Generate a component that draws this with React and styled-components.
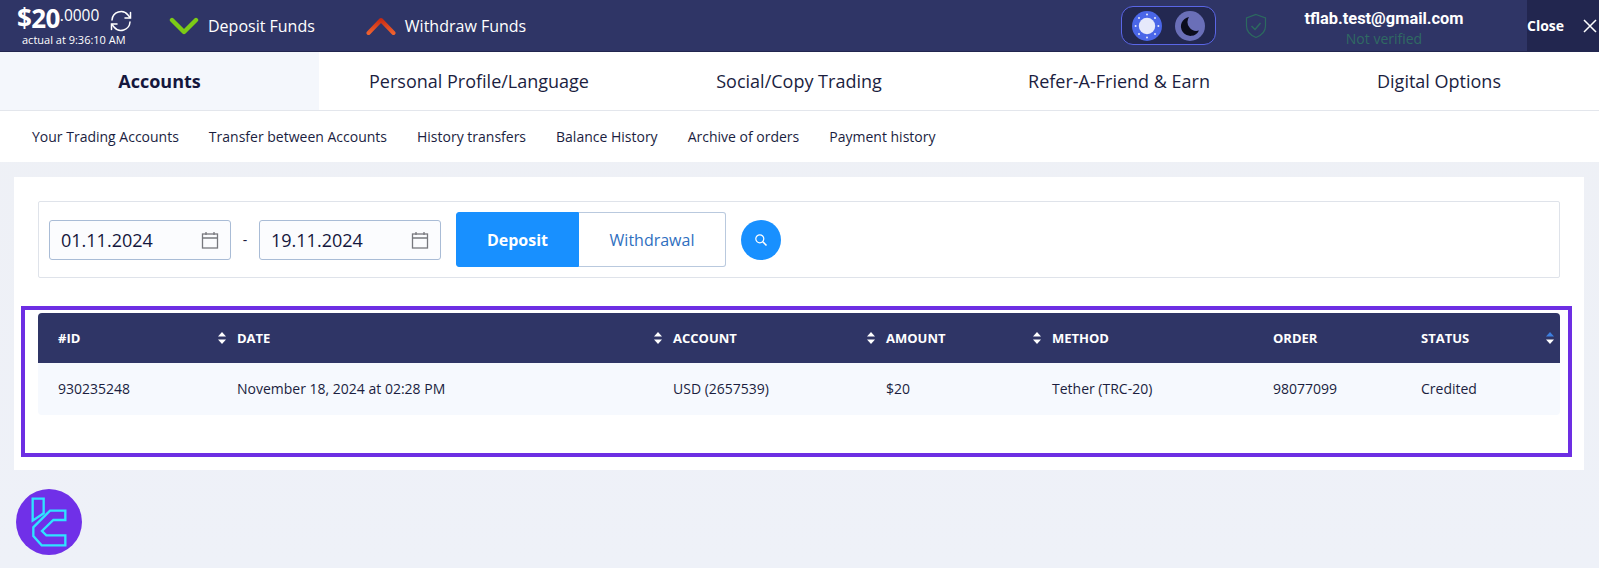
import React from "react";
import styled, { createGlobalStyle } from "styled-components";

const GlobalStyle = createGlobalStyle`
  html, body {
    margin: 0;
    padding: 0;
    height: 100%;
    overflow: hidden;
    font-family: "Open Sans", "Liberation Sans", sans-serif;
    color: #1b1e3f;
  }
  * { box-sizing: border-box; }
`;

const Page = styled.div`
  position: relative;
  width: 1599px;
  height: 568px;
  background: linear-gradient(180deg, #eef0f5 0%, #eef1f8 100%);
`;

const TopBar = styled.header`
  height: 52px;
  display: flex;
  align-items: center;
  background: #2f3566;
  color: #fff;
  border-bottom: 1px solid #22264f;
`;

const Balance = styled.div`
  width: 92px;
  margin: 0 0 2px 17px;
  display: flex;
  flex-direction: column;
  flex-shrink: 0;
`;

const Amount = styled.div`
  display: flex;
  align-items: flex-start;
  height: 30px;
  font-size: 26px;
  line-height: 30px;
  font-weight: 700;
  letter-spacing: -0.6px;

  span {
    font-size: 15.5px;
    line-height: 24px;
    font-weight: 400;
    letter-spacing: 0;
  }
`;

const Actual = styled.div`
  font-size: 11px;
  line-height: 13px;
  margin-left: 5px;
  white-space: nowrap;
`;

const Refresh = styled.svg`
  width: 24px;
  height: 24px;
  margin: -9px 0 0 0;
  flex-shrink: 0;
`;

const FundLink = styled.div`
  display: flex;
  align-items: center;
  gap: 9px;
  margin-left: ${(p) => p.$offset}px;
  font-size: 16px;
  white-space: nowrap;
`;

const Chevron = styled.svg`
  width: 30px;
  height: 20px;
`;

const RightGroup = styled.div`
  margin-left: auto;
  display: flex;
  align-items: center;
  height: 100%;
`;

const ThemeSwitch = styled.div`
  width: 95px;
  height: 39px;
  display: flex;
  align-items: center;
  justify-content: space-between;
  padding: 0 10px;
  border: 1px solid #5a66e6;
  border-radius: 12px;
  background: #232851;
`;

const ThemeIcon = styled.svg`
  width: 30px;
  height: 30px;
`;

const Shield = styled.svg`
  width: 22px;
  height: 26px;
  margin-left: 29px;
`;

const UserBlock = styled.div`
  width: 160px;
  margin-left: 37px;
  text-align: center;
  white-space: nowrap;
`;

const Email = styled.div`
  font-family: Roboto, "Liberation Sans", sans-serif;
  font-weight: 700;
  font-size: 16.4px;
  line-height: 18px;
  margin-top: 6px;
`;

const Verified = styled.div`
  font-size: 14px;
  line-height: 18px;
  margin-top: 2px;
  color: #2f6a63;
`;

const CloseBox = styled.div`
  width: 72px;
  height: 100%;
  margin-left: 63px;
  display: flex;
  align-items: center;
  justify-content: space-between;
  padding-right: 2px;
  background: #22264f;
  font-size: 14px;
  font-weight: 700;
`;

const CloseIcon = styled.svg`
  width: 14px;
  height: 14px;
`;

const Tabs = styled.nav`
  display: grid;
  grid-template-columns: 319px 320px 320px 320px 320px;
  height: 59px;
  background: #fff;
  border-bottom: 1px solid #e3e6ec;
`;

const Tab = styled.div`
  display: flex;
  align-items: center;
  justify-content: center;
  padding-bottom: 1px;
  font-size: 18px;
  font-weight: ${(p) => (p.$active ? 700 : 400)};
  background: ${(p) => (p.$active ? "#f4f7fc" : "#fff")};
  color: ${(p) => (p.$active ? "#14173d" : "#1b1e3f")};
`;

const SubNav = styled.nav`
  height: 51px;
  display: flex;
  align-items: center;
  gap: 30px;
  padding-left: 32px;
  background: #fff;
  font-size: 14px;
`;

const Card = styled.main`
  margin: 15px 15px 0 14px;
  height: 293px;
  padding: 24px 24px 0 24px;
  background: #fff;
`;

const FilterBox = styled.div`
  height: 77px;
  display: flex;
  align-items: center;
  padding-left: 10px;
  border: 1px solid #dfe3ea;
  border-radius: 2px;
`;

const DateInput = styled.div`
  width: 182px;
  height: 40px;
  display: flex;
  align-items: center;
  justify-content: space-between;
  padding: 0 11px 0 11px;
  border: 1px solid #a9bcd6;
  border-radius: 3px;
  background: #fbfcfe;
  font-size: 18px;
  color: #14173d;
`;

const Calendar = styled.svg`
  width: 18px;
  height: 18px;
`;

const Dash = styled.span`
  width: 28px;
  text-align: center;
  font-size: 14px;
`;

const Segment = styled.div`
  display: flex;
  height: 55px;
  margin-left: 15px;
`;

const SegmentButton = styled.div`
  display: flex;
  align-items: center;
  justify-content: center;
  width: ${(p) => (p.$active ? 123 : 147)}px;
  font-size: 16px;
  font-weight: ${(p) => (p.$active ? 700 : 400)};
  color: ${(p) => (p.$active ? "#fff" : "#2f6fc0")};
  background: ${(p) => (p.$active ? "#1890ff" : "#fff")};
  border: 1px solid ${(p) => (p.$active ? "#1890ff" : "#b9c9de")};
  border-left-width: ${(p) => (p.$active ? 1 : 0)}px;
  border-radius: ${(p) => (p.$active ? "3px 0 0 3px" : "0 3px 3px 0")};
`;

const SearchButton = styled.div`
  width: 40px;
  height: 40px;
  margin-left: 15px;
  display: flex;
  align-items: center;
  justify-content: center;
  border-radius: 50%;
  background: #1890ff;
`;

const TableFrame = styled.section`
  height: 151px;
  margin: 28px -12px 0 -17px;
  padding: 3px 8px 0 13px;
  border: 4px solid #6d2ee3;
`;

const Row = styled.div`
  display: grid;
  grid-template-columns: 199px 436px 213px 166px 221px 148px 139px;
  align-items: center;
`;

const HeadRow = styled(Row)`
  height: 50px;
  background: #2f3566;
  border-radius: 4px 4px 0 0;
  color: #fff;
  font-size: 13px;
  font-weight: 700;
`;

const BodyRow = styled(Row)`
  height: 52px;
  padding-bottom: 2px;
  background: #f6f9fe;
  border-radius: 0 0 4px 4px;
  font-size: 14px;
`;

const HeadCell = styled.div`
  display: flex;
  align-items: center;
  justify-content: space-between;
  padding-left: ${(p) => (p.$first ? 20 : 0)}px;
  padding-right: ${(p) => (p.$last ? 5 : 10)}px;
`;

const BodyCell = styled.div`
  padding-left: ${(p) => (p.$first ? 20 : 0)}px;
`;

const Sort = styled.svg`
  width: 10px;
  height: 14px;
`;

const LogoBadge = styled.svg`
  position: absolute;
  left: 16px;
  top: 489px;
  width: 66px;
  height: 66px;
`;

const SortIcon = ({ active }) => (
  <Sort viewBox="0 0 10 14">
    <path d="M5 1 9 5.5H1Z" fill={active ? "#3d7fe0" : "#fff"} />
    <path d="M5 13 1 8.5H9Z" fill="#fff" />
  </Sort>
);

const CalendarIcon = () => (
  <Calendar viewBox="0 0 18 18" fill="none" stroke="#77787d" strokeWidth="1.3">
    <rect x="1.5" y="3" width="15" height="14" />
    <path d="M1.5 7H16.5M5 1V4M13 1V4" />
  </Calendar>
);

const columns = [
  { label: "#ID", value: "930235248", sort: true },
  { label: "DATE", value: "November 18, 2024 at 02:28 PM", sort: true },
  { label: "ACCOUNT", value: "USD (2657539)", sort: true },
  { label: "AMOUNT", value: "$20", sort: true },
  { label: "METHOD", value: "Tether (TRC-20)" },
  { label: "ORDER", value: "98077099" },
  { label: "STATUS", value: "Credited", sort: true, active: true },
];

const tabs = ["Accounts", "Personal Profile/Language", "Social/Copy Trading", "Refer-A-Friend & Earn", "Digital Options"];
const subLinks = ["Your Trading Accounts", "Transfer between Accounts", "History transfers", "Balance History", "Archive of orders", "Payment history"];

const App = () => {
  return (
    <Page>
      <GlobalStyle />
      <TopBar>
        <Balance>
          <Amount>
            $20<span>.0000</span>
          </Amount>
          <Actual>actual at 9:36:10 AM</Actual>
        </Balance>
        <Refresh viewBox="0 0 24 24" fill="none" stroke="#fff" strokeWidth="1.5" strokeLinecap="round">
          <path d="M3 11a9 9 0 0 1 16-5l2 2.5" />
          <path d="M21.5 3.5v5.5H16" />
          <path d="M21 13a9 9 0 0 1-16 5l-2-2.5" />
          <path d="M2.5 20.5V15H8" />
        </Refresh>
        <FundLink $offset={36}>
          <Chevron viewBox="0 0 30 20" fill="none" stroke="#7ccb16" strokeWidth="4.4" strokeLinecap="round" strokeLinejoin="round">
            <path d="M3 4 15 16 27 4" />
          </Chevron>
          Deposit Funds
        </FundLink>
        <FundLink $offset={51}>
          <Chevron viewBox="0 0 30 20" fill="none" strokeWidth="4" strokeLinecap="round" strokeLinejoin="round">
            <defs>
              <linearGradient id="redUp" gradientUnits="userSpaceOnUse" x1="0" y1="3" x2="0" y2="18">
                <stop offset="0" stopColor="#c92a12" />
                <stop offset="1" stopColor="#f0632f" />
              </linearGradient>
            </defs>
            <path d="M2.5 17 15 4 27.5 17" stroke="url(#redUp)" />
          </Chevron>
          Withdraw Funds
        </FundLink>
        <RightGroup>
          <ThemeSwitch>
            <ThemeIcon viewBox="0 0 30 30">
              <circle cx="15" cy="15" r="15" fill="#4a66e8" />
              <circle cx="15" cy="15" r="8.2" fill="#e6e9fb" />
              <g fill="#e6e9fb">
                <circle cx="15" cy="3.6" r="1" />
                <circle cx="15" cy="26.4" r="1" />
                <circle cx="3.6" cy="15" r="1" />
                <circle cx="26.4" cy="15" r="1" />
                <circle cx="7" cy="7" r="1" />
                <circle cx="23" cy="7" r="1" />
                <circle cx="7" cy="23" r="1" />
                <circle cx="23" cy="23" r="1" />
              </g>
            </ThemeIcon>
            <ThemeIcon viewBox="0 0 30 30">
              <circle cx="15" cy="15" r="15" fill="#6a6fb8" />
              <path d="M14 6a9.5 9.5 0 1 0 10 13.5A9 9 0 0 1 14 6Z" fill="#0b0c1c" />
            </ThemeIcon>
          </ThemeSwitch>
          <Shield viewBox="0 0 22 26" fill="none" stroke="#2c6a5f" strokeWidth="1.2">
            <path d="M11 1.5 20.5 5V13C20.5 19 16 22.5 11 24.5 6 22.5 1.5 19 1.5 13V5Z" />
            <path d="M6.5 13 10 16.5 15.5 10" strokeWidth="1.5" />
          </Shield>
          <UserBlock>
            <Email>tflab.test@gmail.com</Email>
            <Verified>Not verified</Verified>
          </UserBlock>
          <CloseBox>
            Close
            <CloseIcon viewBox="0 0 14 14" stroke="#fff" strokeWidth="1.5">
              <path d="M1 1 13 13M13 1 1 13" />
            </CloseIcon>
          </CloseBox>
        </RightGroup>
      </TopBar>

      <Tabs>
        {tabs.map((t, i) => (
          <Tab key={t} $active={i === 0}>
            {t}
          </Tab>
        ))}
      </Tabs>

      <SubNav>
        {subLinks.map((l) => (
          <span key={l}>{l}</span>
        ))}
      </SubNav>

      <Card>
        <FilterBox>
          <DateInput>
            01.11.2024
            <CalendarIcon />
          </DateInput>
          <Dash>-</Dash>
          <DateInput>
            19.11.2024
            <CalendarIcon />
          </DateInput>
          <Segment>
            <SegmentButton $active>Deposit</SegmentButton>
            <SegmentButton>Withdrawal</SegmentButton>
          </Segment>
          <SearchButton>
            <svg width="14" height="14" viewBox="0 0 14 14" fill="none" stroke="#fff" strokeWidth="1.2">
              <circle cx="5.8" cy="5.8" r="4" />
              <path d="M8.8 8.8 12.5 12.5" strokeWidth="1.6" />
            </svg>
          </SearchButton>
        </FilterBox>

        <TableFrame>
          <HeadRow>
            {columns.map((c, i) => (
              <HeadCell key={c.label} $first={i === 0} $last={i === columns.length - 1}>
                {c.label}
                {c.sort && <SortIcon active={c.active} />}
              </HeadCell>
            ))}
          </HeadRow>
          <BodyRow>
            {columns.map((c, i) => (
              <BodyCell key={c.label} $first={i === 0}>
                {c.value}
              </BodyCell>
            ))}
          </BodyRow>
        </TableFrame>
      </Card>

      <LogoBadge viewBox="48 57 198 198">
        <circle cx="147" cy="156" r="99" fill="#7030e8" />
        <g fill="none" stroke="#2fe3ff" strokeWidth="7">
          <path d="M98 86H131V130L98 152Z" />
          <path d="M196 122H150L100 172V198L125 226H196V196H139L126 183L160 150H196Z" />
        </g>
      </LogoBadge>
    </Page>
  );
};

export default App;
